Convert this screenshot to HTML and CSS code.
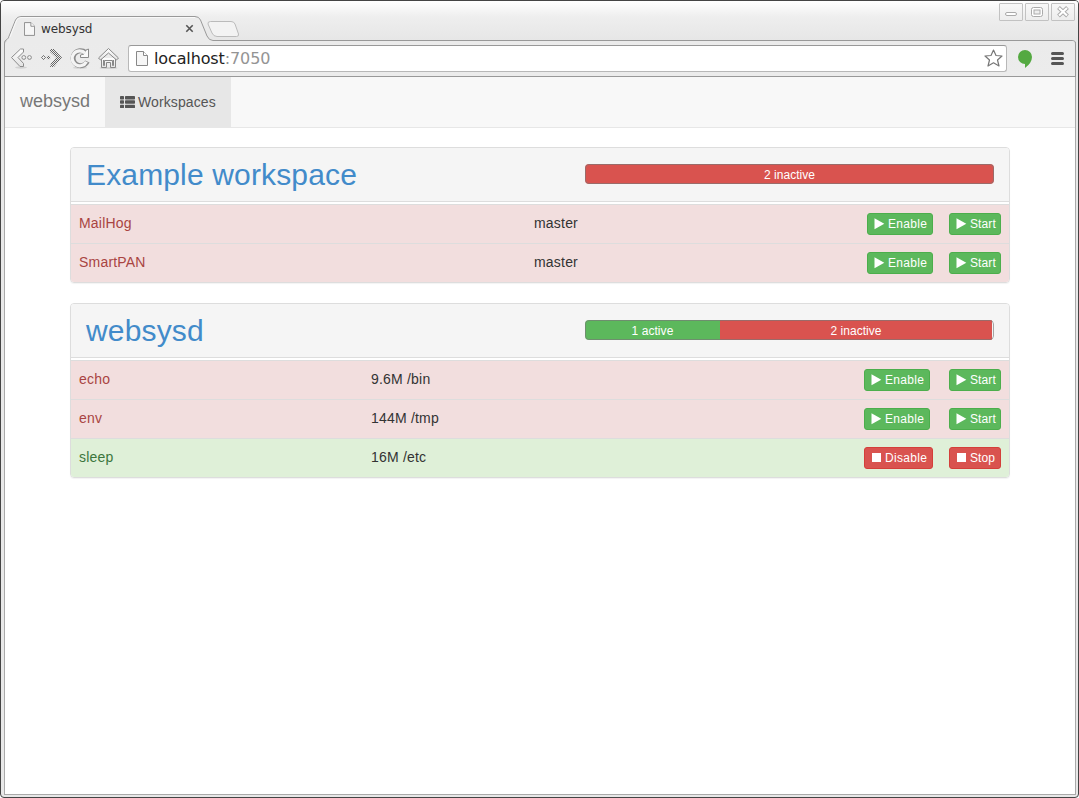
FILE: index.html
```html
<!DOCTYPE html>
<html lang="en">
<head>
<meta charset="utf-8">
<title>websysd</title>
<link rel="stylesheet" href="styles.css">
</head>
<body>
<svg class="defs" aria-hidden="true">
  <symbol id="play" viewBox="0 0 12 12"><path d="M1.500 .3 L11.300 5.700 L1.500 11.300Z" fill="#fff"/></symbol>
  <symbol id="stop" viewBox="0 0 12 12"><path d="M2 1H11V10H2Z" fill="#fff"/></symbol>
  <symbol id="page" viewBox="0 0 12 15"><path d="M.5.5H7.500L11.500 4.500V14.500H.5Z" fill="#f6f6f6" stroke="#888"/><path d="M7.500.5V4.500H11.500" fill="#fff" stroke="#888"/></symbol>
  <linearGradient id="metal" x2="0" y2="1"><stop stop-color="#fff"/><stop offset="1" stop-color="#e2e2e2"/></linearGradient>
</svg>
<div class="window">
  <header class="tabstrip">
    <svg class="tab-shape" width="1079" height="43" viewBox="0 0 1079 43">
      <path d="M4.500 43V42.500Q4.500 40.500 7 39.500Q8.500 38.500 9.500 35L15.500 20Q17 16.500 21 16.500H195Q199 16.500 200.500 20L207 36Q209 40.500 213 40.500H1072Q1075.500 40.500 1075.500 43" fill="#ebebeb" stroke="#999"/>
      <path d="M10 37L16.500 20.500Q18 17.500 21 17.500H195" fill="none" stroke="#fff" stroke-opacity=".7"/>
      <path d="M210.500 21.500H231Q234 21.500 235 24L238.500 34Q239 36.500 236.500 36.500H217Q213.500 36.500 212 33L208 24Q207.500 21.500 210.500 21.500Z" fill="#f3f3f3" stroke="#bbb"/>
    </svg>
    <div class="tab">
      <svg class="tab-page" width="11" height="14"><use href="#page"/></svg>
      <span class="tab-title">websysd</span>
      <svg class="tab-close" width="9" height="9" viewBox="0 0 9 9"><path d="M1.300 1.300L7.700 7.700M7.700 1.300L1.300 7.700" stroke="#555" stroke-width="1.600"/></svg>
    </div>
    <div class="controls">
      <span class="control"><svg width="24" height="18"><rect x="6.500" y="9.500" width="11" height="3" rx="1.500" fill="#fff" stroke="#aaa"/></svg></span>
      <span class="control"><svg width="24" height="18"><rect x="6.500" y="4.500" width="11" height="9" rx="2" fill="#fff" stroke="#aaa"/><rect x="9" y="7" width="6" height="4" fill="#eee" stroke="#aaa"/></svg></span>
      <span class="control"><svg width="24" height="18"><path d="M7.500 4.500L16.500 13M16.500 4.500L7.500 13" stroke="#aaa" stroke-width="4"/><path d="M8 5L16 12.500M16 5L8 12.500" stroke="#fff" stroke-width="2.200"/></svg></span>
    </div>
  </header>
  <div class="toolbar">
    <div class="tools">
      <svg width="23" height="22" viewBox="11 47 23 22" fill="url(#metal)" stroke="#8c8c8c">
        <ellipse cx="21" cy="67.500" rx="6" ry="1.200" fill="#d2d2d2" stroke="none"/><path d="M20.500 49L11.500 57.500L20 66.500L23.500 66.500V63.500L18 57.500L23.500 52V49Z" stroke-linejoin="round"/><circle cx="23.800" cy="57.500" r="1.900"/><circle cx="29.500" cy="57.500" r="1.900"/>
      </svg>
      <svg width="22" height="22" viewBox="41 47 22 22">
        <defs><pattern id="check" width="2" height="2" patternUnits="userSpaceOnUse"><path d="M0 0h1v1H0zM1 1h1v1H1z" fill="#666"/></pattern></defs>
        <path d="M50 49H54L62 57.500L54 67H50L51 63L56 57.500L50 52Z" fill="url(#check)"/><g fill="url(#check)"><path d="M43.500 55l2.500 2.500-2.500 2.500-2.500-2.500zM48.500 55l2.500 2.500-2.500 2.500-2.500-2.500z"/></g><path d="M43 57h1v1h-1zM48 57h1v1h-1z" fill="#eee"/>
      </svg>
      <svg width="20" height="22" viewBox="70 47 20 22">
        <ellipse cx="80" cy="67.800" rx="7" ry="1" fill="#d2d2d2"/><path d="M87.300 61.500A7.500 7.500 0 1 1 85.500 52.500" fill="none" stroke="#8c8c8c" stroke-width="5"/><path d="M88.500 49V57.500H80.500V55L84 54L86 50Z" fill="#fafafa" stroke="#8c8c8c"/><path d="M86.400 61.700A7.500 7.500 0 1 1 85.300 53.300" fill="none" stroke="#f4f4f4" stroke-width="3.200"/>
      </svg>
      <svg width="21" height="22" viewBox="98 47 21 22" fill="url(#metal)" stroke="#888">
        <ellipse cx="108.500" cy="68" rx="9" ry="1" fill="#d2d2d2" stroke="none"/><path d="M101.500 58V67.500H106.500V62.500H110.500V67.500H115.500V58"/><path d="M108.500 48.500L98.500 58L100.500 60L108.500 53L116.500 60L118.500 58Z"/><path d="M103.500 60V65.500H104.500V60.500H112.500V65.500H113.500V60" fill="none"/>
      </svg>
    </div>
    <div class="address">
      <svg width="12" height="15"><use href="#page"/></svg>
      <span class="url">localhost<span class="port">:7050</span></span>
      <svg class="star" width="19" height="18" viewBox="0 0 19 18"><path d="M9.500 1L12 6.500L18 7L13.500 11L15 17L9.500 13.800L4 17L5.500 11L1 7L7 6.500Z" fill="#fff" stroke="#777" stroke-width="1.200" stroke-linejoin="round"/></svg>
    </div>
    <svg class="balloon" width="14" height="18" viewBox="0 0 14 18"><path d="M7 0A7 7 0 0 0 7 14V18Q13.900 13 14 7A7 7 0 0 0 7 0Z" fill="#54a941"/></svg>
    <svg class="menu" width="13" height="13" viewBox="0 0 13 13"><path d="M1.500 1.500H11.500M1.500 6.500H11.500M1.500 11.500H11.500" stroke="#555" stroke-width="3" stroke-linecap="round"/></svg>
  </div>
  <main class="page">
    <nav class="navbar">
      <a class="brand">websysd</a>
      <a class="nav-item">
        <svg width="15" height="14" viewBox="0 0 15 14" fill="#555"><rect y="1" width="4" height="3.400" rx=".7"/><rect x="5" y="1" width="10" height="3.400" rx=".7"/><rect y="5.300" width="4" height="3.400" rx=".7"/><rect x="5" y="5.300" width="10" height="3.400" rx=".7"/><rect y="9.700" width="4" height="3.400" rx=".7"/><rect x="5" y="9.700" width="10" height="3.400" rx=".7"/></svg>
        <span>Workspaces</span>
      </a>
    </nav>
    <div class="container">
      <section class="panel example">
        <div class="heading"><h2>Example workspace</h2>
          <div class="progress"><div class="bar danger full">2 inactive</div></div>
        </div>
        <div class="row inactive"><div class="name">MailHog</div><div>master</div>
          <div><a class="btn go"><svg width="12" height="12"><use href="#play"/></svg>Enable</a></div>
          <div><a class="btn go small"><svg width="12" height="12"><use href="#play"/></svg>Start</a></div></div>
        <div class="row inactive"><div class="name">SmartPAN</div><div>master</div>
          <div><a class="btn go"><svg width="12" height="12"><use href="#play"/></svg>Enable</a></div>
          <div><a class="btn go small"><svg width="12" height="12"><use href="#play"/></svg>Start</a></div></div>
      </section>
      <section class="panel system">
        <div class="heading"><h2>websysd</h2>
          <div class="progress"><div class="bar success third">1 active</div><div class="bar danger rest">2 inactive</div></div>
        </div>
        <div class="row inactive"><div class="name">echo</div><div>9.6M /bin</div>
          <div><a class="btn go"><svg width="12" height="12"><use href="#play"/></svg>Enable</a></div>
          <div><a class="btn go small"><svg width="12" height="12"><use href="#play"/></svg>Start</a></div></div>
        <div class="row inactive"><div class="name">env</div><div>144M /tmp</div>
          <div><a class="btn go"><svg width="12" height="12"><use href="#play"/></svg>Enable</a></div>
          <div><a class="btn go small"><svg width="12" height="12"><use href="#play"/></svg>Start</a></div></div>
        <div class="row active"><div class="name">sleep</div><div>16M /etc</div>
          <div><a class="btn halt wide"><svg width="12" height="12"><use href="#stop"/></svg>Disable</a></div>
          <div><a class="btn halt small"><svg width="12" height="12"><use href="#stop"/></svg>Stop</a></div></div>
      </section>
    </div>
  </main>
</div>
</body>
</html>
```
FILE: styles.css
```css
* { box-sizing: border-box; }
body { margin: 0; background: #fff; font: 14px/20px "Liberation Sans", Arial, sans-serif; color: #333; }
svg { display: block; flex: none; }
.defs { position: absolute; width: 0; height: 0; }
.window {
  position: relative;
  display: flex;
  flex-direction: column;
  width: 1079px;
  height: 798px;
  border: 1px solid #444;
  border-radius: 4px;
  background: #e8e8e8;
  overflow: hidden;
}
.tabstrip {
  display: flex;
  justify-content: space-between;
  height: 40px;
  flex: none;
  background: linear-gradient(#fff, #eee 16px, #e6e6e6);
}
.tab-shape { position: absolute; left: -1px; top: -1px; }
.tab {
  position: relative;
  display: flex;
  align-items: center;
  width: 170px;
  height: 24px;
  margin: 16px 0 0 23px;
  font: 12px/16px "DejaVu Sans", sans-serif;
}
.tab-title { margin-left: 6px; flex: 1; color: #333; letter-spacing: -.1px; }
.tab svg { overflow: visible; }
.tab-close { margin-top: -1px; }
.controls { position: relative; display: flex; gap: 2px; margin: 2px 3px 0 0; }
.control { width: 24px; height: 18px; border: 1px solid #c2c2c2; border-radius: 1px; background: linear-gradient(#f8f8f8, #ededed); }
.control svg { margin: -1px; }
.toolbar {
  position: relative;
  display: flex;
  align-items: center;
  height: 36px;
  flex: none;
  margin: 0 2px 0 3px;
  padding-left: 6px;
  border: solid #999;
  border-width: 0 1px 1px;
  border-radius: 3px 3px 0 0;
  background: linear-gradient(#ebebeb, #ececec);
}
.tools { display: flex; width: 117px; margin-top: -1px; }
.tools svg:nth-child(2), .tools svg:nth-child(3) { margin-left: 7px; }
.tools svg:nth-child(4) { margin-left: 8px; }
.address {
  display: flex;
  align-items: center;
  width: 879px;
  height: 27px;
  padding: 0 3px 0 7px;
  border: 1px solid #b8b8b8;
  border-top-color: #999;
  border-radius: 3px;
  background: #fff;
}
.url { flex: 1; margin-left: 6px; font: 16px/22px "DejaVu Sans", sans-serif; letter-spacing: -.12px; color: #222; }
.port { color: #949494; }
.star { margin-top: -1px; }
.balloon { margin-left: 11px; }
.menu { margin-left: 19px; }
.page {
  flex: 1;
  margin: 0 2px 2px 3px;
  border: solid #aaa;
  border-width: 0 1px 1px;
  background: #fff;
}
.navbar { display: flex; height: 51px; background: #f8f8f8; border-bottom: 1px solid #e7e7e7; }
.brand { width: 100px; padding: 14px 0 0 15px; font-size: 18px; color: #777; }
.nav-item { display: flex; align-items: center; gap: 3px; width: 126px; padding-left: 15px; background: #e7e7e7; color: #555; letter-spacing: .1px; }
.container { width: 940px; margin: 19px 0 0 65px; }
.panel { margin-bottom: 20px; border: 1px solid #ddd; border-radius: 4px; box-shadow: 0 1px 1px rgba(0, 0, 0, .05); overflow: hidden; }
.heading { display: flex; justify-content: space-between; height: 54px; margin-bottom: 2px; padding: 0 15px; background: #f5f5f5; border-bottom: 1px solid #ddd; }
h2 { margin: 10px 0 0; font-size: 30px; line-height: 33px; font-weight: 400; letter-spacing: .15px; color: #428bca; }
.progress { position: relative; display: flex; width: 409px; height: 20px; margin-top: 16px; border-radius: 4px; background: #f5f5f5; overflow: hidden; }
.progress::after { content: ""; position: absolute; inset: 0; border: 1px solid rgba(120, 120, 120, .65); border-radius: 4px; }
.bar { padding-top: 1px; font-size: 12px; line-height: 20px; letter-spacing: .05px; color: #fff; text-align: center; }
.full { width: 100%; }
.third { width: 135px; }
.rest { width: 272px; }
.danger { background: #d9534f; }
.success { background: #5cb85c; }
.row { display: grid; height: 39px; border-top: 1px solid #ddd; letter-spacing: .2px; }
.example .row { grid-template-columns: 455px 333px 82px 68px; }
.system .row { grid-template-columns: 292px 493px 85px 68px; }
.row > div { padding: 8px; }
.inactive { background: #f2dede; }
.active { background: #dff0d8; }
.inactive .name { color: #a94442; }
.active .name { color: #3c763d; }
.btn { display: inline-flex; vertical-align: top; align-items: center; gap: 3px; width: 66px; height: 22px; padding: 0 5px; border: 1px solid; border-radius: 3px; font-size: 12px; line-height: 18px; letter-spacing: .3px; white-space: nowrap; color: #fff; }
.btn.small { width: 52px; letter-spacing: .1px; }
.btn.wide { width: 69px; }
.go { background: #5cb85c; border-color: #4cae4c; }
.halt { background: #d9534f; border-color: #d43f3a; }
```
